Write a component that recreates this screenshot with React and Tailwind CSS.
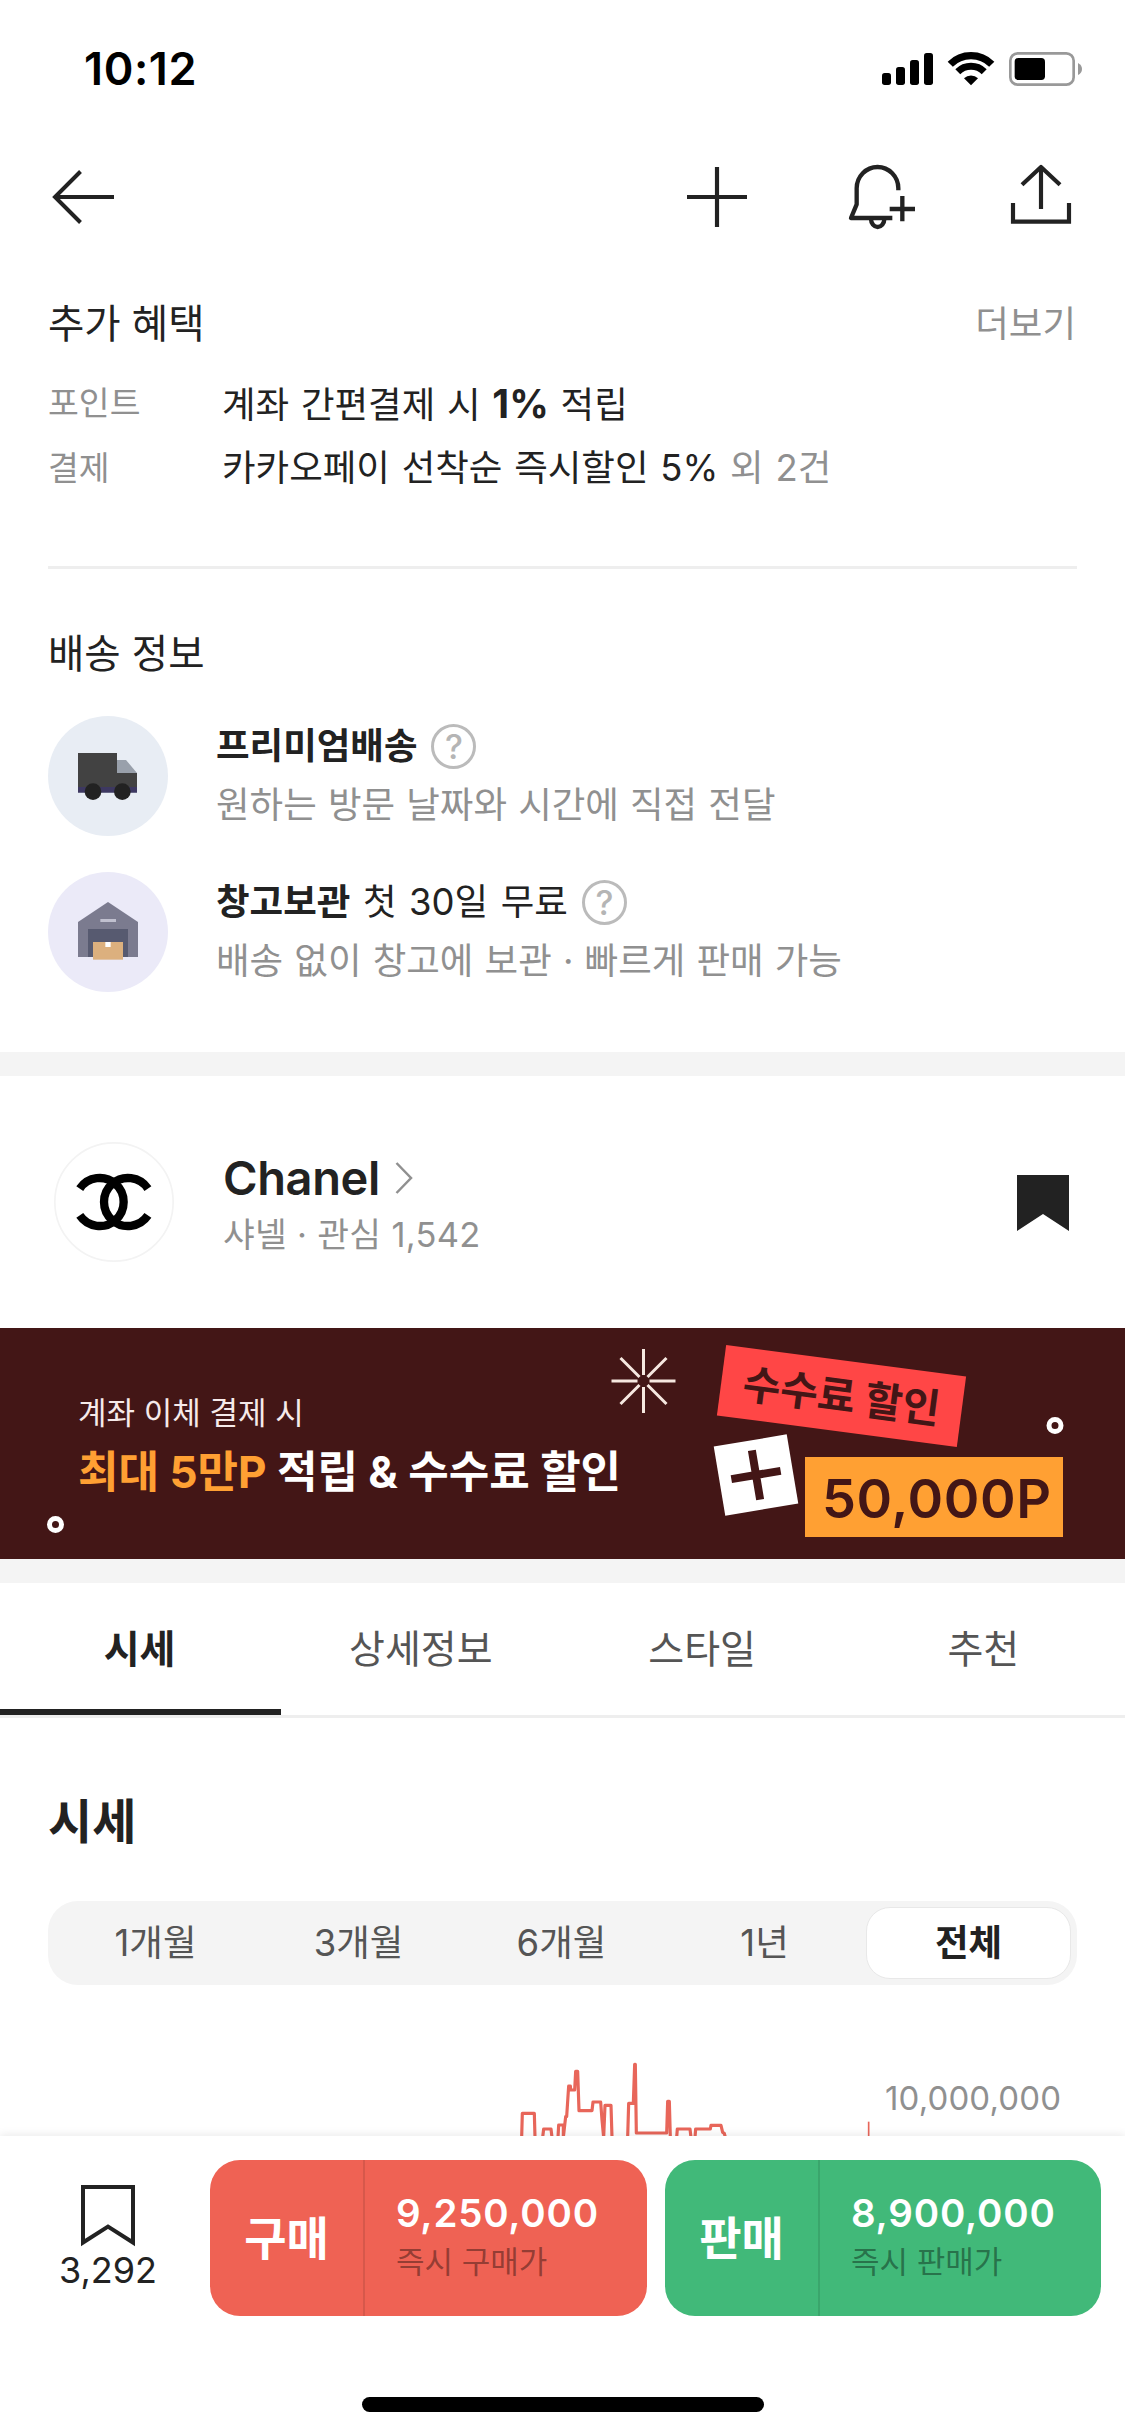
const benefits = [
  {
    label: '포인트',
    body: (
      <>
        계좌 간편결제 시 <b className="text-[39px] font-bold">1%</b> 적립
      </>
    ),
  },
  {
    label: '결제',
    body: (
      <>
        카카오페이 선착순 즉시할인 5% <span className="text-[#909090]">외 2건</span>
      </>
    ),
  },
];

const tabs = ['시세', '상세정보', '스타일', '추천'];
const periods = ['1개월', '3개월', '6개월', '1년', '전체'];

function StatusIcons() {
  return (
    <svg className="w-[204px] h-[38px]" viewBox="60 45 612 114">
      <rect x="66" y="114" width="27" height="36" rx="8" />
      <rect x="108" y="96" width="27" height="54" rx="8" />
      <rect x="150" y="75" width="27" height="75" rx="8" />
      <rect x="192" y="54" width="27" height="96" rx="8" />
      <g fill="none" stroke="#000">
        <path d="M270.8 87.8a88 88 0 0 1 124.4 0" strokeWidth="22" />
        <path d="M293.4 110.4a56 56 0 0 1 79.2 0" strokeWidth="21" />
      </g>
      <path d="M333 151l-21-21a30 30 0 0 1 42 0z" />
      <rect x="451" y="55" width="190" height="94" rx="22" fill="none" stroke="#999" strokeWidth="8" />
      <rect x="464" y="69" width="91" height="66" rx="11" />
      <path d="M654 84q12 6 12 18t-12 18z" fill="#999" />
    </svg>
  );
}

function BackIcon() {
  return (
    <svg className="size-[70px]" viewBox="48 162 70 70" fill="none" stroke="#222" strokeWidth="4">
      <path d="M114 197H56M80.500 171.500L55 197l25.500 25.500" />
    </svg>
  );
}

function PlusIcon() {
  return (
    <svg className="size-[70px]" viewBox="66 96 210 210" fill="none" stroke="#222" strokeWidth="12.500">
      <path d="M171 111v180M81 201h180" />
    </svg>
  );
}

function BellPlusIcon() {
  return (
    <svg
      className="size-[70px]"
      viewBox="561 96 210 210"
      fill="none"
      stroke="#222"
      strokeWidth="13"
      strokeLinejoin="round"
    >
      <path d="M715 181v-6a62.500 64 0 0 0-125 0v48l-17 41h124" />
      <path d="M633 267a20 24 0 0 0 40 0" />
      <path d="M727 198v76M689 237h76" />
    </svg>
  );
}

function ShareIcon() {
  return (
    <svg className="size-[70px]" viewBox="1038 96 210 210" fill="none" stroke="#222" strokeWidth="12.500">
      <path d="M1059 219v56h168v-56M1143 237V112" />
      <path d="M1086 164l57-53 57 53" strokeLinejoin="round" />
    </svg>
  );
}

function TruckIcon() {
  return (
    <svg className="size-[120px] shrink-0" viewBox="24 48 360 360">
      <circle cx="204" cy="228" r="180" fill="#e8edf4" />
      <path d="M114 159h117v60h60v42H114z" fill="#424242" />
      <path d="M231 180h27l33 39h-60z" fill="#99a0ab" />
      <path d="M114 261h177v17H114z" fill="#3d3861" />
      <circle cx="159" cy="275" r="25" fill="#222" />
      <circle cx="247" cy="275" r="25" fill="#222" />
    </svg>
  );
}

function WarehouseIcon() {
  return (
    <svg className="size-[120px] shrink-0" viewBox="24 516 360 360">
      <circle cx="204" cy="696" r="180" fill="#ebeaf8" />
      <path d="M114 666l90-60 90 60v105H114z" fill="#7b7b8f" />
      <path d="M144 687h120v84H144z" fill="#575a70" />
      <path d="M181 657h47v9h-47z" fill="#c0c0cf" />
      <path d="M159 726h90v53h-90z" fill="#dcb07e" />
      <path d="M196 726h16v15h-16z" fill="#fff" />
    </svg>
  );
}

function ChanelLogo() {
  return (
    <svg className="size-[120px] shrink-0" viewBox="43 36 360 360" fill="none">
      <circle cx="223" cy="216" r="177.500" stroke="#f3f3f3" strokeWidth="5" />
      <g stroke="#000" strokeWidth="25">
        <path d="M324.700 175.700a72 72 0 1 0 0 80.600" />
        <path d="M120.300 175.700a72 72 0 1 1 0 80.600" />
      </g>
    </svg>
  );
}

function HelpIcon() {
  return (
    <span className="size-[45px] rounded-full border-[3px] border-[#bbb] flex items-center justify-center text-[34px] leading-none font-medium text-[#b5b5b5]">
      ?
    </span>
  );
}

function DeliveryRow({ icon, title, extra, description }) {
  return (
    <div className="flex gap-[48px] h-[120px]">
      {icon}
      <div className="pt-[1px]">
        <div className="flex items-center gap-[14px] h-[59px] text-[36.500px] text-[#222] whitespace-pre [word-spacing:2.300px]">
          <span>
            <b className="font-bold">{title}</b>
            {extra}
          </span>
          <HelpIcon />
        </div>
        <p className="text-[36.500px] leading-[59px] text-[#909090] [word-spacing:0.900px]">{description}</p>
      </div>
    </div>
  );
}

function Banner() {
  return (
    <div className="relative h-[231px] bg-[#431616] pl-[78px] pt-[60px]">
      <p className="text-[31px] leading-[50px] text-[#f6eaea]">계좌 이체 결제 시</p>
      <p className="mt-[4px] text-[44px] leading-[60px] font-bold text-white">
        <span className="text-[#ffa033]">최대 5만P</span> 적립 &amp; 수수료 할인
      </p>
      <svg className="absolute inset-0 w-full h-full" viewBox="0 1328 1125 231">
        <g stroke="#f6e8e0" strokeWidth="3" transform="translate(643.500 1381)">
          <path d="M0-32V-6M0 32V6M-32 0H-6M32 0H6M-23-23L-4-4M23 23L4 4M-23 23L-4 4M23-23L4-4" />
        </g>
        <g fill="none" stroke="#fff" strokeWidth="5">
          <circle cx="1055" cy="1425.500" r="6" />
          <circle cx="55.500" cy="1524.500" r="6" />
        </g>
        <g transform="translate(841.500 1396) rotate(7.500)">
          <rect x="-121" y="-35.500" width="242" height="71" fill="#ff4646" />
          <text y="15" textAnchor="middle" fontSize="41" fontWeight="700" fill="#431616">
            수수료 할인
          </text>
        </g>
        <g transform="translate(756 1475) rotate(-9.500)">
          <rect x="-37" y="-35" width="74" height="70" fill="#fff" />
          <path d="M0-25V25M-25 0H25" stroke="#431616" strokeWidth="8" />
        </g>
        <rect x="805" y="1457" width="258" height="80" fill="#ffa033" />
        <text
          x="936.500"
          y="1518"
          textAnchor="middle"
          textLength="229"
          fontSize="54"
          fontWeight="600"
          fill="#431616"
        >
          50,000P
        </text>
      </svg>
    </div>
  );
}

function PriceChart() {
  return (
    <svg className="block w-full h-[151px]" viewBox="0 1985 1125 151">
      <g
        transform="translate(500 2050) scale(0.33333)"
        fill="none"
        stroke="#e8665a"
        strokeWidth="9.500"
        strokeLinejoin="round"
      >
        <path d="M65 262L67 190H103L105 262M128 262L131 237H153L156 262M174 262L176 225H190V262L197 200H200L206 108H211L212 120H224L227 64H233L237 182H276L279 156H302L306 210L311 262L315 166H333L336 262" />
        <path d="M383 262L386 160H400L404 43H406L409 249H500L503 154H508L511 262M530 262L532 237H570L573 262M585 262L587 237H631L633 226H663L668 247L673 250L676 262" />
        <path d="M1106 215V262" strokeWidth="5" />
      </g>
      <text x="1061" y="2109.500" textAnchor="end" textLength="176" fontSize="33" fill="#909090">
        10,000,000
      </text>
    </svg>
  );
}

function TradeButton({ className, label, price, caption }) {
  return (
    <div className={`flex h-[156px] rounded-[30px] overflow-hidden ${className}`}>
      <div className="w-[155px] flex items-center justify-center border-r-2 border-black/10 text-[46px] font-bold text-white">
        {label}
      </div>
      <div className="pl-[31px] pt-[28px]">
        <p className="text-[38.500px] leading-[50px] font-semibold tracking-[0.800px] text-white">{price}</p>
        <p className="text-[31px] leading-[48px] text-black/40">{caption}</p>
      </div>
    </div>
  );
}

export default function App() {
  return (
    <div className="w-[1125px] h-[2436px] flex flex-col bg-white overflow-hidden text-[#222] font-['Inter','Noto_Sans_CJK_KR',sans-serif]">
      <div className="h-[138px] shrink-0 flex items-center justify-between pl-[84px] pr-[41px]">
        <span className="text-[45px] font-semibold tracking-[0.600px] text-black">10:12</span>
        <StatusIcons />
      </div>

      <header className="h-[118px] shrink-0 flex items-center pl-[48px] pr-[49px]">
        <BackIcon />
        <div className="ml-auto flex items-center">
          <PlusIcon />
          <div className="ml-[95px] mr-[89px] flex">
            <BellPlusIcon />
          </div>
          <ShareIcon />
        </div>
      </header>

      <section className="px-[48px] pt-[38px]">
        <div className="flex justify-between">
          <h2 className="text-[39.500px] leading-[60px]">추가 혜택</h2>
          <span className="mr-[1px] text-[36.500px] leading-[60px] text-[#909090]">더보기</span>
        </div>
        <dl className="mt-[17px]">
          {benefits.map((item) => (
            <div key={item.label} className="flex h-[65px] leading-[65px]">
              <dt className="w-[174px] text-[33.500px] text-[#909090]">{item.label}</dt>
              <dd className="text-[36.500px] [word-spacing:1.500px]">{item.body}</dd>
            </div>
          ))}
        </dl>
        <hr className="mt-[65px] border-t-[3px] border-[#eee]" />
      </section>

      <section className="px-[48px] pt-[55px] pb-[60px]">
        <h2 className="text-[39.500px] leading-[60px]">배송 정보</h2>
        <div className="mt-[32px] flex flex-col gap-[36px]">
          <DeliveryRow
            icon={<TruckIcon />}
            title="프리미엄배송"
            description="원하는 방문 날짜와 시간에 직접 전달"
          />
          <DeliveryRow
            icon={<WarehouseIcon />}
            title="창고보관"
            extra=" 첫 30일 무료"
            description="배송 없이 창고에 보관 · 빠르게 판매 가능"
          />
        </div>
      </section>

      <div className="h-[24px] shrink-0 bg-[#f4f4f4]" />

      <section className="h-[252px] shrink-0 flex items-center pl-[54px] pr-[56px]">
        <ChanelLogo />
        <div className="ml-[49px] pt-[2px]">
          <div className="flex items-center gap-[15px] text-[47px] leading-[64px] font-semibold tracking-[-0.400px]">
            Chanel
            <svg className="w-[18px] h-[34px]" viewBox="0 0 18 34" fill="none" stroke="#909090" strokeWidth="2.500">
              <path d="M1.500 2L16 17 1.500 32" />
            </svg>
          </div>
          <p className="text-[34.500px] leading-[50px] tracking-[0.300px] text-[#909090]">샤넬 · 관심 1,542</p>
        </div>
        <svg className="ml-auto mt-[2px] w-[52px] h-[56px]" viewBox="0 0 52 56" fill="#222">
          <path d="M0 0h52v56L26 39 0 56z" />
        </svg>
      </section>

      <Banner />

      <div className="h-[24px] shrink-0 bg-[#f4f4f4]" />

      <nav className="h-[135px] shrink-0 flex border-b-[3px] border-[#eee]">
        {tabs.map((tab, i) => (
          <div
            key={tab}
            className={`flex-1 pr-[2px] text-center text-[39px] leading-[131px] ${
              i === 0 ? 'font-bold border-b-[6px] border-[#222]' : 'text-[#555]'
            }`}
          >
            {tab}
          </div>
        ))}
      </nav>

      <section>
        <h2 className="mt-[74px] px-[48px] text-[48px] leading-[60px] font-bold">시세</h2>
        <div className="mt-[49px] mx-[48px] h-[84px] p-[6px] flex rounded-[30px] bg-[#f4f4f4]">
          {periods.map((period) => (
            <div
              key={period}
              className={`flex-1 text-center text-[36.500px] ${
                period === '전체'
                  ? 'leading-[70px] rounded-[24px] bg-white font-bold border border-[#e8e8e8]'
                  : 'leading-[73px] text-[#555]'
              }`}
            >
              {period}
            </div>
          ))}
        </div>
        <PriceChart />
      </section>

      <footer className="relative h-[300px] shrink-0 bg-white pt-[24px] pl-[6px] pr-[24px] flex flex-col items-center shadow-[0_-2px_8px_rgba(0,0,0,0.08)]">
        <div className="w-full flex">
          <div className="w-[204px] flex flex-col items-center pt-[25px]">
            <svg className="w-[54px] h-[62px]" viewBox="0 0 54 62" fill="none" stroke="#222" strokeWidth="4">
              <path d="M2 2h50v55.500L27 41.500 2 57.500z" />
            </svg>
            <span className="text-[36px] leading-[46px]">3,292</span>
          </div>
          <TradeButton className="w-[437px] bg-[#ef6254]" label="구매" price="9,250,000" caption="즉시 구매가" />
          <TradeButton
            className="ml-[18px] w-[436px] bg-[#41b979]"
            label="판매"
            price="8,900,000"
            caption="즉시 판매가"
          />
        </div>
        <div className="mt-[81px] ml-[18px] w-[402px] h-[15px] rounded-full bg-black" />
      </footer>
    </div>
  );
}
